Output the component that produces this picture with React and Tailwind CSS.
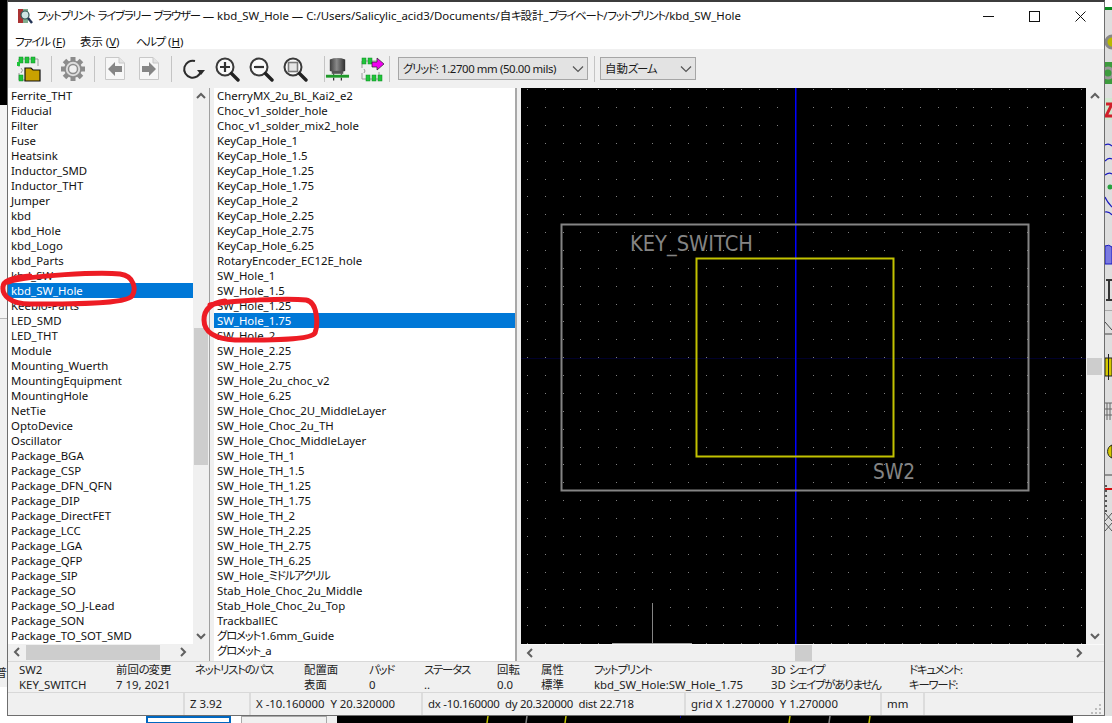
const leftItems = [
  'Ferrite_THT', 'Fiducial', 'Filter', 'Fuse', 'Heatsink', 'Inductor_SMD', 'Inductor_THT', 'Jumper', 'kbd', 'kbd_Hole',
  'kbd_Logo', 'kbd_Parts', 'kbd_SW', 'kbd_SW_Hole', 'Keebio-Parts', 'LED_SMD', 'LED_THT', 'Module', 'Mounting_Wuerth',
  'MountingEquipment', 'MountingHole', 'NetTie', 'OptoDevice', 'Oscillator', 'Package_BGA', 'Package_CSP',
  'Package_DFN_QFN', 'Package_DIP', 'Package_DirectFET', 'Package_LCC', 'Package_LGA', 'Package_QFP', 'Package_SIP',
  'Package_SO', 'Package_SO_J-Lead', 'Package_SON', 'Package_TO_SOT_SMD',
]

const middleItems = [
  'CherryMX_2u_BL_Kai2_e2', 'Choc_v1_solder_hole', 'Choc_v1_solder_mix2_hole', 'KeyCap_Hole_1', 'KeyCap_Hole_1.5',
  'KeyCap_Hole_1.25', 'KeyCap_Hole_1.75', 'KeyCap_Hole_2', 'KeyCap_Hole_2.25', 'KeyCap_Hole_2.75', 'KeyCap_Hole_6.25',
  'RotaryEncoder_EC12E_hole', 'SW_Hole_1', 'SW_Hole_1.5', 'SW_Hole_1.25', 'SW_Hole_1.75', 'SW_Hole_2', 'SW_Hole_2.25',
  'SW_Hole_2.75', 'SW_Hole_2u_choc_v2', 'SW_Hole_6.25', 'SW_Hole_Choc_2U_MiddleLayer', 'SW_Hole_Choc_2u_TH',
  'SW_Hole_Choc_MiddleLayer', 'SW_Hole_TH_1', 'SW_Hole_TH_1.5', 'SW_Hole_TH_1.25', 'SW_Hole_TH_1.75', 'SW_Hole_TH_2',
  'SW_Hole_TH_2.25', 'SW_Hole_TH_2.75', 'SW_Hole_TH_6.25', 'SW_Hole_ミドルアクリル', 'Stab_Hole_Choc_2u_Middle',
  'Stab_Hole_Choc_2u_Top', 'TrackballEC', 'グロメット1.6mm_Guide', 'グロメット_a',
]

const msgColumns = [
  { width: 'w-[97px]', top: 'SW2', bottom: 'KEY_SWITCH' },
  { width: 'w-[79px]', top: '前回の変更', bottom: '7 19, 2021' },
  { width: 'w-[109px]', top: 'ネットリストのパス', bottom: '' },
  { width: 'w-[65px]', top: '配置面', bottom: '表面' },
  { width: 'w-[55px]', top: 'パッド', bottom: '0' },
  { width: 'w-[73px]', top: 'ステータス', bottom: '..' },
  { width: 'w-[44px]', top: '回転', bottom: '0.0' },
  { width: 'w-[53px]', top: '属性', bottom: '標準' },
  { width: 'w-[177px]', top: 'フットプリント', bottom: 'kbd_SW_Hole:SW_Hole_1.75' },
  { width: 'w-[138px]', top: '3D シェイプ', bottom: '3D シェイプがありません' },
  { width: 'w-[100px]', top: 'ドキュメント:', bottom: 'キーワード:' },
]

const statusCells = [
  { width: 'w-[177px]', text: '' },
  { width: 'w-[66px]', text: 'Z 3.92' },
  { width: 'w-[172px]', text: 'X -10.160000  Y 20.320000' },
  { width: 'w-[263px] tracking-[-0.25px]', text: 'dx -10.160000  dy 20.320000  dist 22.718' },
  { width: 'w-[196px]', text: 'grid X 1.270000  Y 1.270000' },
  { width: 'w-[43px]', text: 'mm' },
]

// kana in the reference's UI font run narrower than Noto's, so pull those runs in
const Jp = ({ children }) => (
  <>
    {children.split(/([\u3040-\u30ff]+)/).map((part, i) =>
      i % 2 === 1 ? <span key={i} className="tracking-[-1.2px]">{part}</span> : part
    )}
  </>
)

const Chevron = ({ dir }) => {
  const d = {
    up: 'M2 8 L6 4 L10 8',
    down: 'M2 4 L6 8 L10 4',
    left: 'M8 2 L4 6 L8 10',
    right: 'M4 2 L8 6 L4 10',
  }[dir]
  return (
    <svg width="12" height="12" viewBox="0 0 12 12" fill="none" stroke="#606060" strokeWidth="2">
      <path d={d} />
    </svg>
  )
}

const Sep = () => <div className="w-px h-[26px] bg-[#c4c4c4] shrink-0" />

const AppIcon = () => (
  <svg width="17" height="17" viewBox="0 0 17 17" className="ml-[9px] mr-[3px]">
    <rect x="1" y="1" width="5" height="14" fill="#a33" />
    <rect x="6" y="1" width="5" height="14" fill="#7fae8f" />
    <circle cx="8" cy="7" r="4" fill="#cfe4e4" stroke="#355" strokeWidth="1.2" />
    <path d="M11 10 L15 15" stroke="#235" strokeWidth="2.4" />
  </svg>
)

const LibraryIcon = () => (
  <svg width="26" height="26" viewBox="0 0 26 26">
    <path d="M3 3 H22 V10 M3 3 V11 M5 12 Q8 14 5 17 M3 17 V24 H9" fill="none" stroke="#9a9a9a" strokeWidth="1" />
    {[3, 9, 15].map((x) => (
      <rect key={x} x={x} y="1" width="4" height="6" fill="#1fc43a" stroke="#0c8a23" strokeWidth="0.5" />
    ))}
    <rect x="1" y="6" width="3" height="4" fill="#1fc43a" />
    <rect x="3" y="19" width="4" height="6" fill="#1fc43a" stroke="#0c8a23" strokeWidth="0.5" />
    <path d="M9 12 H15 L17 14 H24 V25 H9 Z" fill="#c9a100" stroke="#111" strokeWidth="1.2" />
  </svg>
)

const GearIcon = () => (
  <svg width="26" height="26" viewBox="0 0 26 26">
    {[0, 45, 90, 135, 180, 225, 270, 315].map((a) => (
      <rect key={a} x="10.5" y="1" width="5" height="6" fill="#8c8c8c" transform={`rotate(${a} 13 13)`} />
    ))}
    <circle cx="13" cy="13" r="8" fill="#dcdcdc" stroke="#8c8c8c" strokeWidth="1.6" />
    <circle cx="13" cy="13" r="4.5" fill="#f0f0f0" stroke="#8c8c8c" strokeWidth="1.5" />
  </svg>
)

const PageArrow = ({ flip }) => (
  <svg width="22" height="25" viewBox="0 0 22 25">
    <path d="M1.5 1.5 H15 L20.5 7 V23.5 H1.5 Z" fill="#f7f7f7" stroke="#c8c8c8" />
    <path d="M15 1.5 V7 H20.5" fill="#e4e4e4" stroke="#c8c8c8" />
    <path
      d={flip ? 'M4 10 H11 V6 L18 13 L11 20 V16 H4 Z' : 'M18 10 H11 V6 L4 13 L11 20 V16 H18 Z'}
      fill="#868686"
    />
  </svg>
)

const RefreshIcon = () => (
  <svg width="24" height="24" viewBox="0 0 24 24" fill="none">
    <path d="M20 14 A8.5 8.5 0 1 1 14 4" stroke="#2b2b2b" strokeWidth="2" />
    <path d="M16 13 H24 L20 18 Z" fill="#2b2b2b" />
  </svg>
)

const ZoomIcon = ({ kind }) => (
  <svg width="26" height="26" viewBox="0 0 26 26" fill="none">
    <circle cx="11" cy="11" r="8.5" stroke="#3a3a3a" strokeWidth="2" fill="#fafafa" />
    <path d="M17.5 17.5 L24 24" stroke="#222" strokeWidth="3.4" strokeLinecap="round" />
    {kind === 'in' && <path d="M6 11 H16 M11 6 V16" stroke="#333" strokeWidth="2.2" />}
    {kind === 'out' && <path d="M6 11 H16" stroke="#333" strokeWidth="2.2" />}
    {kind === 'fit' && <rect x="6.5" y="6.5" width="9" height="9" stroke="#7a7a7a" strokeWidth="1.6" fill="#e6e6e6" />}
  </svg>
)

const Part3dIcon = () => (
  <svg width="26" height="26" viewBox="0 0 26 26">
    <defs>
      <linearGradient id="capBody" x1="0" x2="1" y1="0" y2="0">
        <stop offset="0" stopColor="#3e3e3e" />
        <stop offset="0.45" stopColor="#8a8a8a" />
        <stop offset="1" stopColor="#2e2e2e" />
      </linearGradient>
    </defs>
    <path d="M5 3 Q13 0 21 3 V15 Q13 18 5 15 Z" fill="url(#capBody)" />
    <rect x="7" y="15" width="12" height="3" fill="#555" />
    <rect x="1" y="19" width="24" height="3" fill="#1f9a2a" />
    <path d="M9 18 V19 M17 18 V19 M9 22 V25 M17 22 V25" stroke="#222" strokeWidth="1.2" />
  </svg>
)

const ExportIcon = () => (
  <svg width="26" height="26" viewBox="0 0 26 26">
    <path d="M3 5 H20 M3 5 V12 M5 13 Q7 15 5 17 M3 17 V23 H20 V16" fill="none" stroke="#9a9a9a" />
    {[3, 9].map((x) => (
      <rect key={x} x={x} y="2" width="4" height="6" fill="#1fc43a" stroke="#0c8a23" strokeWidth="0.5" />
    ))}
    {[7, 13, 19].map((x) => (
      <rect key={x} x={x} y="19" width="4" height="6" fill="#1fc43a" stroke="#0c8a23" strokeWidth="0.5" />
    ))}
    <path d="M13 6 H18 V2 L25 8 L18 14 V11 H13 Z" fill="#f000f0" stroke="#222" strokeWidth="0.7" />
  </svg>
)

const Select = ({ width, gap, label, track }) => (
  <div className={`${width} h-[23px] ${gap} shrink-0 flex items-center justify-between pl-[4px] pr-[2px] bg-[#e3e3e3] border border-[#a6a6a6] text-[#1a1a1a]`}>
    <span className={`whitespace-nowrap ${track}`}><Jp>{label}</Jp></span>
    <svg width="12" height="8" viewBox="0 0 12 8" fill="none" stroke="#555" strokeWidth="1.2" className="mr-[1px]">
      <path d="M1 1.5 L6 6.5 L11 1.5" />
    </svg>
  </div>
)

const IconBox = ({ width, children }) => (
  <div className={`${width} h-[39px] flex items-center justify-center shrink-0`}>{children}</div>
)

const ListRows = ({ items, selected, padding }) => (
  <div className="flex flex-col">
    {items.map((item) => (
      <div
        key={item}
        className={`h-[15px] leading-[15px] ${padding} whitespace-nowrap ${item === selected ? 'bg-[#0078d7] text-white' : 'text-[#111]'}`}
      >
        <Jp>{item}</Jp>
      </div>
    ))}
  </div>
)

const PcbCanvas = () => {
  const xs = Array.from({ length: 32 }, (_, i) => Math.round(526.9 + i * 17.86) - 521)
  const ys = Array.from({ length: 32 }, (_, i) => Math.round(89.3 + i * 17.86) - 88)
  return (
    <svg width="565" height="556" viewBox="0 0 565 556" className="block bg-black">
      {ys.map((y) => xs.map((x) => <rect key={`${x}-${y}`} x={x} y={y} width="1" height="1" fill="#808080" />))}
      <rect x="0" y="270" width="565" height="1" fill="#00002a" />
      <rect x="274" y="0" width="1" height="556" fill="#0000ff" />
      <rect x="275" y="0" width="1" height="556" fill="#000080" />
      <rect x="40.5" y="136.5" width="467" height="266" fill="none" stroke="#848484" strokeWidth="2" />
      <rect x="175.5" y="170.5" width="197" height="198" fill="none" stroke="#c2c200" strokeWidth="2" />
      <text x="109" y="163" fontFamily="'DejaVu Sans', sans-serif" fontSize="21" fill="#848484" textLength="123" lengthAdjust="spacingAndGlyphs">
        KEY_SWITCH
      </text>
      <text x="352" y="391" fontFamily="'DejaVu Sans', sans-serif" fontSize="21" fill="#848484" textLength="42" lengthAdjust="spacingAndGlyphs">
        SW2
      </text>
      <rect x="131" y="515" width="1" height="40" fill="#848484" />
      <rect x="91" y="555" width="80" height="1" fill="#a0a0a0" />
    </svg>
  )
}

const DesktopRight = () => (
  <svg width="7" height="716" viewBox="0 0 7 716" className="block bg-[#dedede]">
    <rect x="0" y="0" width="7" height="9" fill="#fff" />
    <rect x="0" y="7" width="7" height="3" fill="#0a8a20" />
    <circle cx="7" cy="42" r="6" fill="#b8b800" stroke="#888" strokeWidth="3" />
    <rect x="0" y="62" width="7" height="22" fill="#3d9b3d" />
    <circle cx="3" cy="73" r="5" fill="none" stroke="#999" strokeWidth="3" />
    <rect x="0" y="98" width="7" height="22" fill="#cfe8cf" />
    <path d="M1 104 H7 M7 104 L1 116 H7" stroke="#d0202a" strokeWidth="3" fill="none" />
    <path d="M0 145 Q4 143 7 146 M0 161 Q4 157 7 159 M0 175 Q4 172 7 174 M0 197 Q2 202 7 207 M0 212 Q4 211 7 215" stroke="#1a1ac0" strokeWidth="1.2" fill="none" />
    <circle cx="5" cy="187" r="2.5" fill="#28a040" />
    <path d="M0 246 Q4 244 7 247 V264 H0 Z" fill="#7a7ae0" stroke="#1a1ac0" />
    <path d="M1 280 H7 M4 280 V300 M1 300 H7" stroke="#333" strokeWidth="2" fill="none" />
    <rect x="0" y="310" width="7" height="1" fill="#aaa" />
    <path d="M0 322 L7 330 M0 334 H7" stroke="#444" fill="none" />
    <rect x="0" y="358" width="7" height="18" fill="#d4c800" stroke="#222" />
    <rect x="3" y="354" width="1" height="26" fill="#222" />
    <path d="M0 403 H7 M0 409 H7 M0 415 H7 M2 403 V420 M5 403 V420" stroke="#666" />
    <path d="M7 445 A7 7 0 0 0 7 458 Z" fill="#d4c800" stroke="#222" />
    <path d="M0 475 H7" stroke="#444" />
    <path d="M1 485 V512" stroke="#555" strokeDasharray="2 3" strokeWidth="2" />
    <path d="M0 489 H7" stroke="#d01010" strokeWidth="2" />
    <path d="M0 513 L7 521 M7 513 L0 521 M0 523 L7 531 M7 523 L0 531" stroke="#555" />
  </svg>
)

const DesktopBottom = () => (
  <div className="h-[7px] flex overflow-hidden bg-white">
    <div className="w-[146px] bg-white" />
    <div className="w-[85px] h-[8px] border-2 border-[#0067c0] bg-white" />
    <div className="w-[10px]" />
    <div className="w-[86px] h-[8px] border border-[#a8a8a8] bg-[#f0f0f0]" />
    <div className="w-[10px] bg-[#f0f0f0]" />
    <svg width="736" height="7" viewBox="0 0 736 7" className="block bg-black">
      <path d="M151 0 L150 7 M229 0 L228 7 M453 0 L452 7 M533 0 L532 7" stroke="#c2c200" strokeWidth="1.5" />
      <path d="M190 0 L189 7 M493 0 L492 7" stroke="#848484" strokeWidth="1.5" />
      <rect x="343" y="0" width="1" height="2" fill="#0000a0" />
    </svg>
  </div>
)

export default function App() {
  return (
    <div className="relative w-[1112px] h-[723px] overflow-hidden bg-white text-[11.4px] [font-feature-settings:'palt'] font-['Noto_Sans','Noto_Sans_CJK_JP',sans-serif]">
      <div className="flex h-[716px]">
        {/* desktop behind the window, left side */}
        <div className="w-[7px] flex flex-col overflow-hidden">
          <div className="h-[105px] bg-black" />
          <div className="h-[214px] bg-[#f4f4f4] border-b border-[#b8b8b8]" />
          <div className="h-[344px] bg-[#f0f0f0]" />
          <div className="h-[24px] bg-[#f0f0f0] flex justify-end leading-[20px] text-[#222]">普</div>
          <div className="flex-1 bg-white" />
        </div>

        <div className="w-[1098px] flex flex-col border-x border-[#6e6e6e] border-b border-t-2 border-t-[#3c3c3c] bg-[#f0f0f0]">
          {/* title bar */}
          <div className="h-[31px] bg-white flex items-center pb-[3px] text-[#111]">
            <AppIcon />
            <span className="whitespace-nowrap">
              <Jp>フットプリント ライブラリー ブラウザー — kbd_SW_Hole — C:/Users/Salicylic_acid3/Documents/自キ設計_プライベート/フットプリント/kbd_SW_Hole</Jp>
            </span>
            <div className="ml-auto flex items-center">
              <div className="w-[46px] flex justify-center">
                <svg width="11" height="11" viewBox="0 0 11 11"><rect x="0" y="5" width="11" height="1" fill="#111" /></svg>
              </div>
              <div className="w-[46px] flex justify-center">
                <svg width="11" height="11" viewBox="0 0 11 11"><rect x="0.5" y="0.5" width="10" height="10" fill="none" stroke="#111" /></svg>
              </div>
              <div className="w-[46px] flex justify-center mr-px">
                <svg width="11" height="11" viewBox="0 0 11 11"><path d="M0.5 0.5 L10.5 10.5 M10.5 0.5 L0.5 10.5" stroke="#111" /></svg>
              </div>
            </div>
          </div>

          {/* menu */}
          <div className="h-[16px] bg-white flex items-center pl-[7px] pt-[1px] text-[#111]">
            <span className="w-[65px]"><Jp>ファイル</Jp> (<u>F</u>)</span>
            <span className="w-[56px]">表示 (<u>V</u>)</span>
            <span><Jp>ヘルプ</Jp> (<u>H</u>)</span>
          </div>

          {/* toolbar */}
          <div className="h-[39px] flex items-center pl-[8px]">
            <IconBox width="w-[26px]"><LibraryIcon /></IconBox>
            <div className="w-[9px]" /><Sep />
            <IconBox width="w-[42px]"><GearIcon /></IconBox><Sep />
            <IconBox width="w-[40px]"><PageArrow /></IconBox>
            <IconBox width="w-[28px]"><PageArrow flip /></IconBox>
            <div className="w-[8px]" /><Sep />
            <IconBox width="w-[42px]"><RefreshIcon /></IconBox>
            <IconBox width="w-[26px]"><ZoomIcon kind="in" /></IconBox>
            <div className="w-[8px]" />
            <IconBox width="w-[26px]"><ZoomIcon kind="out" /></IconBox>
            <div className="w-[8px]" />
            <IconBox width="w-[26px]"><ZoomIcon kind="fit" /></IconBox>
            <div className="w-[16px]" /><Sep />
            <IconBox width="w-[25px]"><Part3dIcon /></IconBox>
            <div className="w-[9px]" />
            <IconBox width="w-[26px]"><ExportIcon /></IconBox>
            <div className="w-[4px]" /><Sep />
            <Select width="w-[190px]" gap="ml-[8px] mr-[6px]" label="グリッド: 1.2700 mm (50.00 mils)" track="tracking-[-0.4px]" /><Sep />
            <Select width="w-[96px]" gap="ml-[5px]" label="自動ズーム" track="" />
          </div>

          {/* library list, footprint list and canvas */}
          <div className="h-[573px] flex">
            <div className="w-[201px] flex flex-col shrink-0">
              <div className="h-[556px] flex">
                <div className="w-[185px] bg-white overflow-hidden">
                  <ListRows items={leftItems} selected="kbd_SW_Hole" padding="pl-[3px]" />
                </div>
                <div className="w-[16px] flex flex-col items-center justify-between py-[2px] relative">
                  <Chevron dir="up" />
                  <div className="absolute left-px top-[240px] w-[14px] h-[137px] bg-[#cdcdcd]" />
                  <Chevron dir="down" />
                </div>
              </div>
              <div className="h-[16px] flex items-center">
                <div className="w-[18px] flex justify-center"><Chevron dir="left" /></div>
                <div className="w-[134px] h-[15px] bg-[#cdcdcd]" />
                <div className="w-[33px] flex justify-center pl-[12px]"><Chevron dir="right" /></div>
              </div>
            </div>
            <div className="w-px bg-[#a0a0a0]" />
            <div className="w-[4px]" />
            <div className="w-[303px] bg-white border-r-2 border-[#a8a8a8] overflow-hidden shrink-0">
              <ListRows items={middleItems} selected="SW_Hole_1.75" padding="pl-[3px]" />
            </div>
            <div className="w-[4px]" />
            <div className="flex-1 flex flex-col">
              <div className="flex h-[556px]">
                <PcbCanvas />
                <div className="flex-1 relative flex flex-col items-center justify-between py-[2px]">
                  <Chevron dir="up" />
                  <div className="absolute left-px top-[270px] w-[15px] h-[17px] bg-[#cdcdcd]" />
                  <Chevron dir="down" />
                </div>
              </div>
              <div className="h-[17px] flex items-center border-t border-[#fafafa] relative">
                <div className="w-[17px] flex justify-center"><Chevron dir="left" /></div>
                <div className="absolute left-[274px] top-0 w-[17px] h-[16px] bg-[#cdcdcd]" />
                <div className="ml-[532px] w-[17px] flex justify-center"><Chevron dir="right" /></div>
              </div>
            </div>
          </div>

          {/* message panel */}
          <div className="h-[32px] flex pl-[11px] border-t border-[#d8d8d8] border-b leading-[15px] text-[#222]">
            {msgColumns.map((col) => (
              <div key={col.top} className={`${col.width} shrink-0 whitespace-nowrap`}>
                <div><Jp>{col.top}</Jp></div>
                <div><Jp>{col.bottom}</Jp></div>
              </div>
            ))}
          </div>

          {/* status bar */}
          <div className="h-[22px] flex items-center text-[#222]">
            {statusCells.map((cell) => (
              <div key={cell.text} className={`${cell.width} h-full shrink-0 flex items-center pl-[5px] border-r-2 border-[#dcdcdc] whitespace-pre`}>
                {cell.text}
              </div>
            ))}
            <div className="ml-auto mr-[2px] mt-[10px]">
              <svg width="11" height="11" viewBox="0 0 11 11" fill="#bdbdbd">
                <rect x="8" y="0" width="2" height="2" />
                <rect x="4" y="4" width="2" height="2" />
                <rect x="8" y="4" width="2" height="2" />
                <rect x="0" y="8" width="2" height="2" />
                <rect x="4" y="8" width="2" height="2" />
                <rect x="8" y="8" width="2" height="2" />
              </svg>
            </div>
          </div>
        </div>

        <DesktopRight />
      </div>

      <DesktopBottom />

      {/* red hand-drawn marks over the lists */}
      <svg width="330" height="350" viewBox="0 0 330 350" className="absolute left-0 top-0 pointer-events-none" fill="none" stroke="#ed1c24" strokeWidth="5" strokeLinecap="round">
        <path d="M8 282 C30 275 100 272 120 274 C135 276 136 290 132 296 C125 305 60 304 30 304 C10 304 2 295 3 287 C3 281 10 278 30 276" />
        <path d="M210 305 C230 300 290 298 306 300 C318 302 318 325 315 333 C310 341 260 340 235 340 C215 339 204 332 204 320 C204 310 210 303 225 301" />
      </svg>
    </div>
  )
}
